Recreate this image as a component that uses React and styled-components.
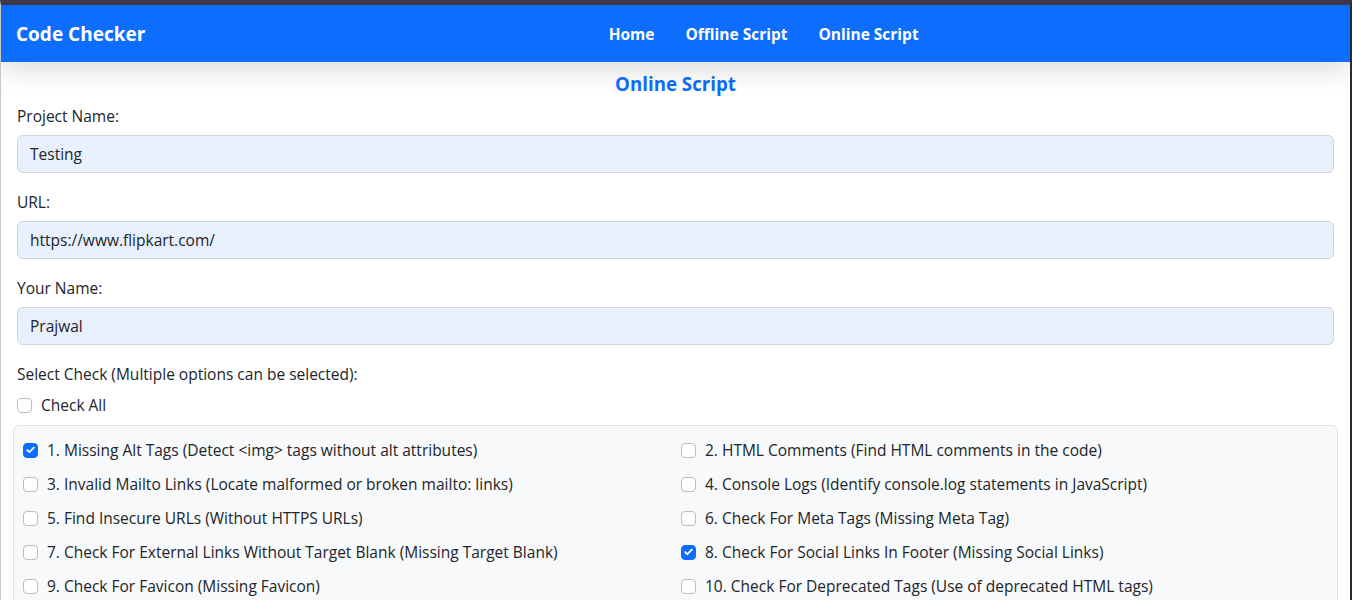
import React from "react";
import styled, { createGlobalStyle } from "styled-components";

const GlobalStyle = createGlobalStyle`
  body {
    margin: 0;
    font-family: "Open Sans", "Noto Sans", Arial, sans-serif;
    color: #212529;
    background: #fff;
  }
  * { box-sizing: border-box; }
`;

const Frame = styled.div`
  min-height: 600px;
  border-top: 5px solid #3f3649;
  border-left: 1px solid #c9c9c9;
  border-right: 2px solid #2b2b2b;
  overflow: hidden;
`;

const NavBar = styled.nav`
  position: relative;
  z-index: 1;
  height: 57px;
  padding: 0 16px 0 15px;
  display: flex;
  align-items: center;
  background-color: #0d6efd;
  box-shadow: 0 6px 30px rgba(0, 0, 0, 0.16);
`;

const Brand = styled.div`
  font-size: 19px;
  font-weight: 700;
  color: #fff;
`;

const NavLinks = styled.div`
  flex: 1;
  display: flex;
  justify-content: center;
  gap: 31px;
  padding-left: 48px;
`;

const NavLink = styled.a`
  font-size: 15.5px;
  font-weight: 700;
  color: #fff;
  text-decoration: none;
`;

const Main = styled.main`
  padding: 0 16px;
`;

const Title = styled.h2`
  margin: 9px 0 7px;
  text-align: center;
  font-size: 18.7px;
  line-height: 26px;
  font-weight: 700;
  color: #0d6efd;
`;

const Field = styled.div`
  margin-bottom: 17px;
`;

const Label = styled.label`
  display: block;
  font-size: 15.5px;
  line-height: 24px;
  margin-bottom: ${(p) => p.$mb || 7}px;
`;

const Input = styled.input`
  display: block;
  width: 100%;
  height: 38px;
  padding: 0 12px;
  font-family: inherit;
  font-size: 15.5px;
  color: #212529;
  background-color: #e8f0fe;
  border: 1px solid #ced4da;
  border-radius: 6px;
  outline: none;
`;

const CheckLine = styled.label`
  display: flex;
  align-items: center;
  gap: 9px;
  font-size: 15.5px;
  line-height: 24px;
  margin-bottom: ${(p) => p.$mb || 0}px;
`;

const Box = styled.span`
  flex: none;
  width: 15px;
  height: 15px;
  border-radius: 4px;
  border: 1px solid ${(p) => (p.$on ? "#0d6efd" : "#b8bdc2")};
  background-color: ${(p) => (p.$on ? "#0d6efd" : "#fff")};
  display: flex;
  align-items: center;
  justify-content: center;
`;

const Card = styled.div`
  margin: 0 -4px;
  padding: 12px 10px 12px 9px;
  background-color: #f8f9fa;
  border: 1px solid #dee2e6;
  border-radius: 6px;
  display: grid;
  grid-template-columns: 1fr 1fr;
  column-gap: 12px;
  row-gap: 10px;
`;

const Checkbox = ({ on }) => (
  <Box $on={on}>
    {on && (
      <svg width="9" height="8" viewBox="0 0 9 8">
        <path d="M1.2 4.2 L3.4 6.2 L7.8 1.6" fill="none" stroke="#fff" strokeWidth="1.8" strokeLinecap="round" strokeLinejoin="round" />
      </svg>
    )}
  </Box>
);

const checks = [
  { t: "1. Missing Alt Tags (Detect <img> tags without alt attributes)", on: true },
  { t: "2. HTML Comments (Find HTML comments in the code)" },
  { t: "3. Invalid Mailto Links (Locate malformed or broken mailto: links)" },
  { t: "4. Console Logs (Identify console.log statements in JavaScript)" },
  { t: "5. Find Insecure URLs (Without HTTPS URLs)" },
  { t: "6. Check For Meta Tags (Missing Meta Tag)" },
  { t: "7. Check For External Links Without Target Blank (Missing Target Blank)" },
  { t: "8. Check For Social Links In Footer (Missing Social Links)", on: true },
  { t: "9. Check For Favicon (Missing Favicon)" },
  { t: "10. Check For Deprecated Tags (Use of deprecated HTML tags)" },
];

const fields = [
  { label: "Project Name:", value: "Testing" },
  { label: "URL:", value: "https://www.flipkart.com/" },
  { label: "Your Name:", value: "Prajwal" },
];

export default function App() {
  return (
    <Frame>
      <GlobalStyle />
      <NavBar>
        <Brand>Code Checker</Brand>
        <NavLinks>
          <NavLink href="#">Home</NavLink>
          <NavLink href="#">Offline Script</NavLink>
          <NavLink href="#">Online Script</NavLink>
        </NavLinks>
      </NavBar>
      <Main>
        <Title>Online Script</Title>
        {fields.map((f) => (
          <Field key={f.label}>
            <Label>{f.label}</Label>
            <Input defaultValue={f.value} />
          </Field>
        ))}
        <Label $mb={7}>Select Check (Multiple options can be selected):</Label>
        <CheckLine $mb={8}>
          <Checkbox />
          Check All
        </CheckLine>
        <Card>
          {checks.map((c) => (
            <CheckLine key={c.t}>
              <Checkbox on={c.on} />
              {c.t}
            </CheckLine>
          ))}
        </Card>
      </Main>
    </Frame>
  );
}
